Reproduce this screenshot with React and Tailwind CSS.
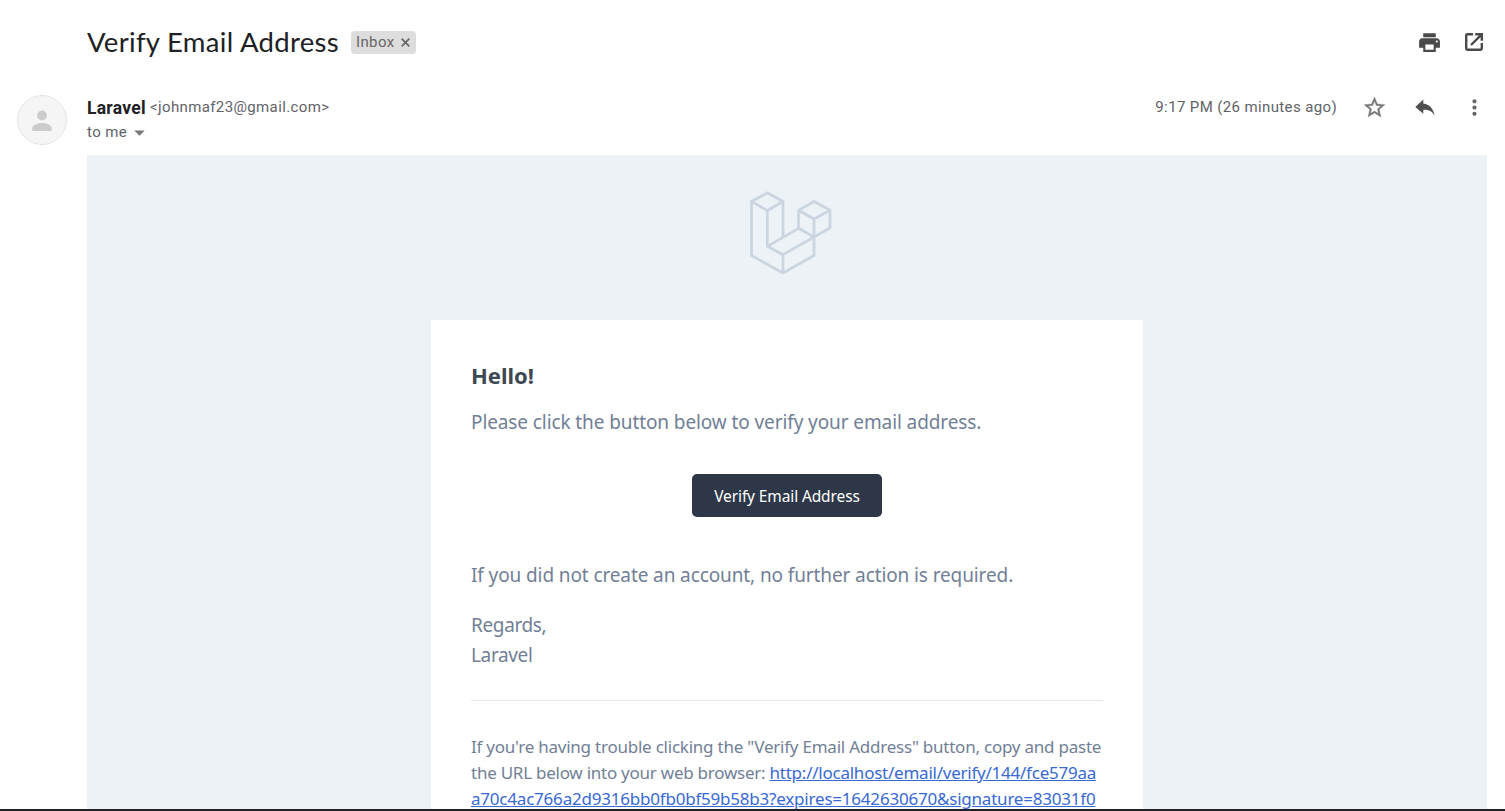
import { MdPrint, MdMoreVert, MdArrowDropDown } from "react-icons/md";

function CloseIcon() {
  return (
    <svg className="ml-[6px] size-[9px]" viewBox="0 0 9 9" fill="none" stroke="#666" strokeWidth="1.7">
      <path d="M0.7 0.7L8.3 8.3M8.3 0.7L0.7 8.3" />
    </svg>
  );
}

function StarIcon() {
  return (
    <svg className="mr-[27.5px] size-[25px]" viewBox="0 0 24 24" fill="#777" stroke="#777" strokeWidth="0.35">
      <path d="M22 9.24l-7.19-.62L12 2 9.19 8.63 2 9.24l5.46 4.73L5.82 21 12 17.27 18.18 21l-1.63-7.03L22 9.24zM12 15.4l-3.76 2.27 1-4.28-3.32-2.88 4.38-.38L12 6.1l1.71 4.04 4.38.38-3.32 2.88 1 4.28L12 15.4z" />
    </svg>
  );
}

function OpenInNewIcon() {
  return (
    <svg className="mr-[2px] size-[18px]" viewBox="0 0 18 18" fill="none" stroke="#4a4a4a" strokeWidth="2.4">
      <path d="M8 1.2H2.4Q1.2 1.2 1.2 2.4V15.6Q1.2 16.8 2.4 16.8H15.6Q16.8 16.8 16.8 15.6V10" />
      <path d="M10.3 1.2H16.8V7.7M16.2 1.8L6 12" />
    </svg>
  );
}

function PersonIcon() {
  return (
    <svg className="mt-px h-[22px] w-5" viewBox="0 0 20 22" fill="#ccc">
      <circle cx="10" cy="5.5" r="4.9" />
      <path d="M0.3 21V18.5C0.3 14.8 6 13 10 13S19.7 14.8 19.7 18.5V21Z" />
    </svg>
  );
}

function ReplyIcon() {
  return (
    <svg className="h-[18px] w-5" viewBox="0 0 20 18" fill="#4f4f4f">
      <path d="M8.3 1.5L0.3 9L8.3 15.8V11.8C13 11.5 17 13 19.6 17.4C18.6 10.8 14.3 6 8.3 5.4Z" />
    </svg>
  );
}

function LaravelMark() {
  return (
    <svg
      className="h-[94px] w-[92px]"
      viewBox="0 0 92 94"
      fill="none"
      stroke="#cbd5e0"
      strokeWidth="2.7"
      strokeLinejoin="round"
    >
      <path d="M6.5 16.5L22.3 7.8L38 16.5L22.3 25.5Z" />
      <path d="M6.5 16.5V70.5L38 88L69 70.5V34L53.5 25.3L69 16.5L85 25.3L69 34" />
      <path d="M85 25.3V43L38 69.7V88M22.3 25.5V61.3L38 69.7M38 16.5V52M22.3 61.3L53.5 43.3V25.3M53.5 43.3L69 52" />
    </svg>
  );
}

function Header() {
  return (
    <header className="flex h-[85px] items-start pl-[87px] pr-5 pt-[26px]">
      <h1 className="w-[264px] whitespace-nowrap font-['Lato',sans-serif] text-[27.5px] leading-8 tracking-[0.31px] text-[#202124]">
        Verify Email Address
      </h1>
      <div className="mt-[5px] flex h-[23px] w-[65px] items-center rounded bg-[#ddd] pl-[5px] text-[15px] leading-[23px] tracking-[0.375px] text-[#666]">
        <span>Inbox</span>
        <CloseIcon />
      </div>
      <div className="ml-auto flex h-8 items-center gap-[23px]">
        <MdPrint className="size-[25px] text-[#4a4a4a]" />
        <OpenInNewIcon />
      </div>
    </header>
  );
}

function SenderBar() {
  return (
    <section className="flex h-[70px] pl-[17px] text-[15px] tracking-[0.375px] text-[#5f6368]">
      <div className="mt-[10px] flex size-[50px] items-center justify-center rounded-full border border-[#e4e4e4] bg-[#f5f5f5]">
        <PersonIcon />
      </div>
      <div className="ml-5 mt-[10px]">
        <div className="flex h-[25px] items-start leading-6">
          <span className="w-[63px] pt-px text-[17.5px] font-bold tracking-[0.26px] text-[#202124]">Laravel</span>
          <span>&lt;johnmaf23@gmail.com&gt;</span>
        </div>
        <div className="flex items-center leading-[25px]">
          <span>to me</span>
          <MdArrowDropDown className="size-[25px] text-[#777]" />
        </div>
      </div>
      <div className="ml-auto mr-[18px] mt-[10px] flex h-6 items-center">
        <span className="mr-[25px]">9:17 PM (26 minutes ago)</span>
        <StarIcon />
        <ReplyIcon />
        <MdMoreVert className="ml-[27.5px] size-[25px] text-[#666]" />
      </div>
    </section>
  );
}

function Message() {
  return (
    <main className="ml-[87px] mr-[18px] flex flex-1 flex-col items-center overflow-hidden bg-[#edf2f7] font-['Noto_Sans',sans-serif] text-[#718096]">
      <div className="ml-2 mt-[30px]">
        <LaravelMark />
      </div>
      <article className="mt-[41px] h-[600px] w-[712px] shrink-0 bg-white px-10 pt-10">
        <h2 className="text-[22px] font-bold leading-[30px] text-[#3d4852]">Hello!</h2>
        <p className="mt-[17px] text-[19px] leading-[30px] tracking-[-0.1px]">
          Please click the button below to verify your email address.
        </p>
        <div className="mt-[37px] flex justify-center">
          <a className="flex h-[43px] w-[190px] items-center justify-center whitespace-nowrap rounded-[5px] bg-[#2d3748] pt-0.5 text-[15.5px] tracking-[-0.12px] text-white">
            Verify Email Address
          </a>
        </div>
        <p className="mt-[43px] text-[19px] leading-[30px] tracking-[-0.11px]">
          If you did not create an account, no further action is required.
        </p>
        <p className="mt-5 text-[19px] leading-[30px] tracking-[-0.36px]">
          Regards,
          <br />
          Laravel
        </p>
        <div className="mt-[30px] whitespace-pre border-t border-[#e8e5ef] pt-[33px] text-[17px] leading-[26px]">
          <p className="tracking-[-0.23px]">If you're having trouble clicking the "Verify Email Address" button, copy and paste</p>
          <p>
            <span className="tracking-[-0.25px]">the URL below into your web browser: </span>
            <a className="tracking-[-0.238px] text-[#3869d4] underline">http://localhost/email/verify/144/fce579aa</a>
          </p>
          <p>
            <a className="tracking-[-0.21px] text-[#3869d4] underline">a70c4ac766a2d9316bb0fb0bf59b58b3?expires=1642630670&amp;signature=83031f0</a>
          </p>
        </div>
      </article>
    </main>
  );
}

export default function App() {
  return (
    <div className="flex h-[811px] w-[1505px] flex-col overflow-hidden border-b-2 border-[#202124] bg-white font-['Roboto',sans-serif]">
      <Header />
      <SenderBar />
      <Message />
    </div>
  );
}
